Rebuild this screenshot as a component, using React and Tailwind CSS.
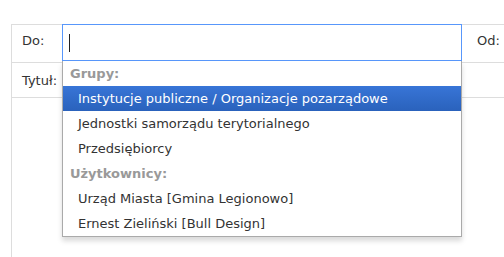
const groups = [
  {
    label: "Grupy:",
    items: [
      "Instytucje publiczne / Organizacje pozarządowe",
      "Jednostki samorządu terytorialnego",
      "Przedsiębiorcy",
    ],
  },
  {
    label: "Użytkownicy:",
    items: ["Urząd Miasta [Gmina Legionowo]", "Ernest Zieliński [Bull Design]"],
  },
];

const Dropdown = () => (
  <ul className="absolute left-0 top-[37px] z-10 w-[400px] border border-t-0 border-[#aaa] bg-white shadow-[0_4px_5px_rgba(0,0,0,0.15)]">
    {groups.map((g) => (
      <li key={g.label}>
        <div className="h-[25px] px-[7px] py-[5px] font-bold leading-[15px] text-[#999]">{g.label}</div>
        <ul>
          {g.items.map((item, i) => {
            const active = g.label === "Grupy:" && i === 0;
            return (
              <li
                key={item}
                className={
                  active
                    ? "h-[25px] pl-[15px] py-[5px] leading-[15px] text-white bg-gradient-to-b from-[#3875d7] to-[#2a62bc]"
                    : "h-[25px] pl-[15px] py-[5px] leading-[15px] text-[#333]"
                }
              >
                {item}
              </li>
            );
          })}
        </ul>
      </li>
    ))}
  </ul>
);

export default function App() {
  return (
    <div className="h-[257px] w-[504px] overflow-hidden bg-white pt-[24px] pl-[11px] text-[13px] text-[#333] font-['DejaVu_Sans',Verdana,sans-serif]">
      <div className="h-full border-l border-[#ddd]">
        {/* Do row */}
        <div className="flex h-[39px] items-start border-y border-[#ddd]">
          <div className="w-[50px] pl-[10px] pt-[8px] leading-[15px]">Do:</div>
          <div className="relative -mt-px">
            <div className="flex h-[37px] w-[400px] items-center border border-[#5897fb] bg-white pl-[6px]">
              <span className="h-[18px] w-px bg-[#222]" />
            </div>
            <Dropdown />
          </div>
          <div className="ml-[15px] pt-[8px] leading-[15px]">Od:</div>
        </div>
        {/* Tytuł row */}
        <div className="flex h-[35px] items-center border-b border-[#ddd]">
          <div className="pl-[10px] leading-[15px]">Tytuł:</div>
        </div>
      </div>
    </div>
  );
}
